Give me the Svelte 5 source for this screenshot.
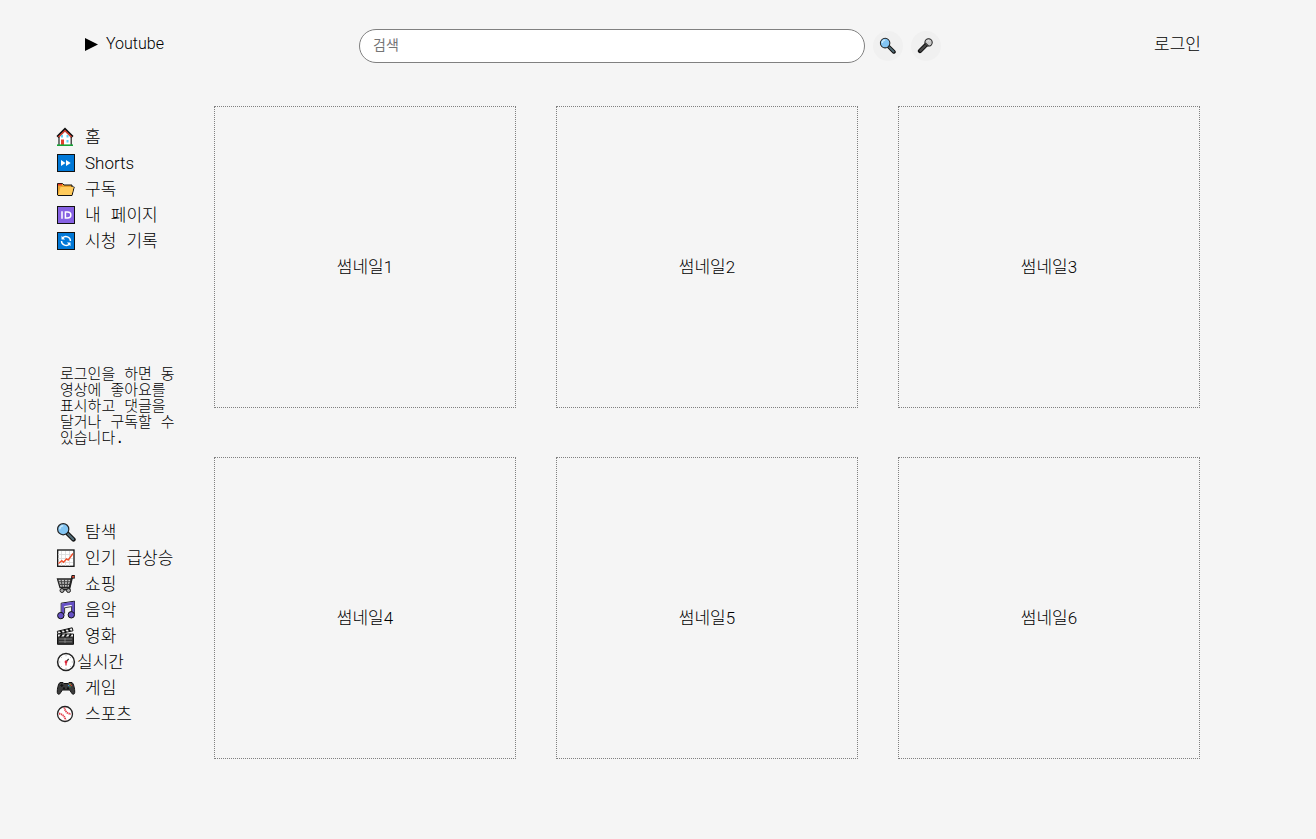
<script>
  const mainMenu = [
    { icon: 'home', label: '홈' },
    { icon: 'shorts', label: 'Shorts', latin: true },
    { icon: 'folder', label: '구독' },
    { icon: 'id', label: '내 페이지' },
    { icon: 'history', label: '시청 기록' }
  ];
  const exploreMenu = [
    { icon: 'search', label: '탐색' },
    { icon: 'chart', label: '인기 급상승' },
    { icon: 'cart', label: '쇼핑' },
    { icon: 'music', label: '음악' },
    { icon: 'movie', label: '영화' },
    { icon: 'clock', label: '실시간', tight: true },
    { icon: 'game', label: '게임' },
    { icon: 'ball', label: '스포츠' }
  ];
  const thumbnails = [1, 2, 3, 4, 5, 6];
</script>

{#snippet icon(name)}
  <svg class="icon" viewBox="0 0 20 20" aria-hidden="true">
    {#if name === 'home'}
      <path d="M3 9v9h12V9L9 3z" fill="#fff" />
      <path d="M3 9.500V18M15.200 9.500V18" stroke="#222" stroke-width="1.200" />
      <path d="M1.500 10 9 2.500l7.500 7.500" fill="none" stroke="#111" stroke-width="3" />
      <path d="M2.500 10 9 3.600l6.500 6.400" fill="none" stroke="#ea4a3a" stroke-width="1.300" />
      <path d="M5 8h2v2.500H5zM10.500 8h2v2.500h-2zM10.500 13h2v2.500h-2z" fill="#5fd0f5" />
      <path d="M5 12.500h3V18H5z" fill="#e0402e" />
      <path d="M1 18.200h16" stroke="#16a637" stroke-width="1.600" />
    {:else if name === 'shorts'}
      <rect x="1.500" y="1.500" width="17" height="17" fill="#0078d7" stroke="#111" />
      <path d="m5 7 4.500 3L5 13zM10 7l4.700 3-4.700 3z" fill="#fff" />
    {:else if name === 'folder'}
      <path d="M1.500 16V4.500h5l1.500 1.500h8V8h2.200L16 16.500H2z" fill="#e9a22c" stroke="#111" stroke-linejoin="round" />
      <path d="M4.500 8h13.200l-2.200 8H2.300z" fill="#ffcb5c" />
      <path d="M2 4.800h4v1.700H2z" fill="#e33b22" />
    {:else if name === 'id'}
      <rect x="1.500" y="1.500" width="17" height="17" fill="#8661e3" stroke="#111" />
      <path d="M6 6.200v7.600M9.400 7h2c4.600 0 4.600 6 0 6h-2z" fill="none" stroke="#fff" stroke-width="1.500" />
    {:else if name === 'history'}
      <rect x="1.500" y="1.500" width="17" height="17" fill="#0078d7" stroke="#111" />
      <path d="M6.500 7a4.600 4.600 0 0 1 8 3M13.500 13a4.600 4.600 0 0 1-8-3" fill="none" stroke="#fff" stroke-width="1.400" />
      <path d="M5.500 4.800v3.600h3.600zM14.500 15.200v-3.600h-3.600z" fill="#fff" />
    {:else if name === 'search'}
      <path d="m11.500 11.500 6 6" stroke="#111" stroke-width="4.400" stroke-linecap="round" />
      <path d="m12 12 5.200 5.200" stroke="#526d78" stroke-width="2.200" stroke-linecap="round" />
      <circle cx="7.200" cy="7.200" r="5.600" fill="#83c5f3" stroke="#222" stroke-width="1.200" />
      <path d="M3.800 7.200a3.500 3.500 0 0 1 3.500-3.500" fill="none" stroke="#c9e9fb" stroke-width="1.600" />
    {:else if name === 'mic'}
      <path d="m10.500 9.500-7 7" stroke="#111" stroke-width="5" stroke-linecap="round" />
      <path d="m10 10-6 6" stroke="#484848" stroke-width="2.600" stroke-linecap="round" />
      <circle cx="13.600" cy="6.400" r="4.300" fill="#c9c9c9" stroke="#222" stroke-width="1.200" />
      <path d="m9.800 6.800 3.700 3.700" stroke="#222" stroke-width="1.200" />
      <path d="m12 5 1.500-1 1.200 1" stroke="#f2f2f2" fill="none" />
    {:else if name === 'chart'}
      <rect x="1.700" y="2" width="16.300" height="16.300" fill="#fff" stroke="#111" stroke-width="1.300" />
      <path d="M5.500 3v15M9.500 3v15M13.500 3v15M2 6.500h15M2 10.500h15M2 14.500h15" stroke="#d8d8d8" stroke-width=".8" />
      <path d="m2.500 15.500 3.300-2.800 1.700 1.500 3-3.200 1.700 1L17 5.500" fill="none" stroke="#f0502c" stroke-width="1.400" />
    {:else if name === 'cart'}
      <path d="M1.500 5h14l-2.200 8.500H4z" fill="#ccc" stroke="#222" stroke-width="1.300" />
      <path d="M5 5 6.300 13M8.500 5v8M12 5l-1 8M2.500 7.700h12M3 10.400h11" stroke="#444" stroke-width="1.100" />
      <path d="M17.500 3h-1.300l-3 12.500H5" fill="none" stroke="#222" stroke-width="1.800" />
      <path d="M15.600 2.800h3.200" stroke="#111" stroke-width="3.600" />
      <path d="M16.200 2.800h2" stroke="#e94b34" stroke-width="1.800" />
      <circle cx="6" cy="16.500" r="2" fill="#aaa" stroke="#222" />
      <circle cx="12.500" cy="16.500" r="2" fill="#aaa" stroke="#222" />
    {:else if name === 'music'}
      <path d="M5.200 14V3.200l13.300-2V14" fill="none" stroke="#111" stroke-width="1" />
      <path d="M6.900 15.500V4.800l10.200-1.700v11.200" fill="none" stroke="#6651c5" stroke-width="2.800" />
      <path d="M8.600 13.500V7.800l7-1.200V12" fill="none" stroke="#111" stroke-width=".8" />
      <circle cx="4.800" cy="15.600" r="3.200" fill="#6651c5" stroke="#111" />
      <circle cx="15.300" cy="14.800" r="3.200" fill="#6651c5" stroke="#111" />
    {:else if name === 'movie'}
      <path d="M1.500 8h16v10.300h-16z" fill="#333" stroke="#111" />
      <path d="m1.300 5.300 14.900-3.500.8 3L2 8z" fill="#f2f2f2" stroke="#111" />
      <path d="m4 4.700 2.200 2.200M8 3.700l2.200 2.400M12 2.800l2.200 2.400" stroke="#111" stroke-width="1.800" />
      <path d="M2 9.500h15" stroke="#eee" stroke-width="2" />
      <path d="m6 8-2 3M10.500 8l-2 3M15 8l-2 3" stroke="#111" stroke-width="1.900" />
      <path d="M3 13h13M3 15.800h13M9 12v5" stroke="#999" stroke-width=".7" />
    {:else if name === 'clock'}
      <circle cx="10" cy="10" r="8.400" fill="#fff" stroke="#222" stroke-width="1.500" />
      <path d="M10 3v1.300M10 15.700V17M3 10h1.300M15.700 10H17M5 5l.8.8M15 5l-.8.8M5 15l.8-.8M15 15l-.8-.8" stroke="#aaa" stroke-width=".8" />
      <path d="m10 10 2.700-3.200" stroke="#333" stroke-width="1.200" />
      <path d="M10 8.800v4.700" stroke="#db2539" stroke-width="1.300" />
      <circle cx="10" cy="10" r="1.400" fill="#db2539" />
    {:else if name === 'game'}
      <path d="M4 4.500h3l1 1h4l1-1h3c1.500 1 2.900 6 2.700 10-.2 2.500-2.500 2-3.300.2L13.700 12H6.300l-1.700 2.700c-.8 1.800-3.100 2.300-3.300-.2-.2-4 1.200-9 2.700-10z" fill="#3b3b3b" stroke="#111" />
      <path d="M4.300 7.500h3M5.800 6v3" stroke="#111" stroke-width="1.200" />
      <circle cx="8" cy="10.300" r="1.100" fill="#111" />
      <circle cx="12" cy="10.300" r="1.100" fill="#111" />
      <circle cx="14" cy="6.200" r=".7" fill="#eab02d" />
      <circle cx="12.700" cy="7.500" r=".7" fill="#3c9ae8" />
      <circle cx="15.300" cy="7.500" r=".7" fill="#e5432f" />
      <circle cx="14" cy="8.800" r=".7" fill="#36a852" />
    {:else if name === 'ball'}
      <circle cx="9" cy="10" r="7.500" fill="#fff" stroke="#222" stroke-width="1.300" />
      <path d="M8.500 3.500c.2 3.500 2.500 6 6.500 6.500M3 9.500c3.700.7 6 3 6.500 6.700" fill="none" stroke="#e33d4a" stroke-width="1.800" stroke-dasharray="1.300 .6" />
    {/if}
  </svg>
{/snippet}

{#snippet menu(items, name)}
  <nav aria-label={name}>
    <ul>
      {#each items as item}
        <li>
          <a href="#{item.icon}" class:tight={item.tight} class:latin={item.latin}>
            {@render icon(item.icon)}<span>{item.label}</span>
          </a>
        </li>
      {/each}
    </ul>
  </nav>
{/snippet}

<header>
  <a class="logo" href="#top">
    <svg viewBox="0 0 13 13" aria-hidden="true"><path d="M0 0 13 6.500 0 13z" /></svg>
    <span>Youtube</span>
  </a>
  <form role="search" onsubmit={(event) => event.preventDefault()}>
    <input type="search" placeholder="검색" aria-label="검색" />
    <button type="submit" aria-label="검색">{@render icon('search')}</button>
    <button type="button" aria-label="음성 검색">{@render icon('mic')}</button>
  </form>
  <a class="login" href="#login">로그인</a>
</header>

<div class="page">
  <aside>
    {@render menu(mainMenu, '메뉴')}
    <p>로그인을 하면 동<br />영상에 좋아요를<br />표시하고 댓글을<br />달거나 구독할 수<br />있습니다.</p>
    {@render menu(exploreMenu, '탐색')}
  </aside>
  <main>
    {#each thumbnails as number}
      <article>썸네일{number}</article>
    {/each}
  </main>
</div>

<style>
  :global(body) {
    background: #f5f5f5;
    color: #000;
    font: 300 17px/26px Roboto, 'Noto Sans CJK KR', sans-serif;
  }
  a {
    color: inherit;
    text-decoration: none;
  }
  header {
    display: grid;
    grid-template-columns: 274px minmax(0, 1fr) 260px;
    align-items: center;
    padding: 28px 115px 0 85px;
    height: 36px;
  }
  .logo {
    display: flex;
    align-items: center;
    gap: 8px;
    padding-bottom: 4px;
    font-size: 16px;
  }
  .logo svg {
    width: 13px;
    height: 13px;
  }
  form {
    display: flex;
    align-items: center;
    gap: 8px;
  }
  input {
    box-sizing: border-box;
    flex: 1;
    min-width: 0;
    height: 34px;
    padding: 0 13px 4px;
    border: 1px solid #808080;
    border-radius: 17px;
    background: #fff;
    font: 14px 'Noto Sans CJK KR', sans-serif;
    appearance: none;
    outline: none;
  }
  input::placeholder {
    color: #757575;
  }
  button {
    display: grid;
    place-items: center;
    width: 30px;
    height: 30px;
    padding: 0 1px 2px 0;
    border: 0;
    border-radius: 50%;
    background: #f0f0f0;
  }
  button .icon {
    width: 17px;
    height: 17px;
  }
  .icon {
    flex: none;
    width: 20px;
    height: 20px;
  }
  .login {
    justify-self: end;
    padding-bottom: 4px;
  }
  .page {
    display: flex;
    padding: 42px 116px 80px 56px;
  }
  aside {
    flex: 0 0 158px;
    padding-top: 18px;
    font-family: 'Liberation Mono', 'Noto Sans CJK KR', monospace;
  }
  ul {
    margin: 0;
    padding: 0;
    list-style: none;
  }
  li a {
    display: flex;
    align-items: center;
    gap: 9px;
    height: 26px;
    white-space: nowrap;
  }
  li span {
    padding-top: 4px;
  }
  li .tight {
    gap: 1px;
  }
  li .latin {
    font-family: Roboto, sans-serif;
  }
  li .latin span {
    padding-top: 0;
  }
  p {
    margin: 114px 0 71px 4px;
    font-size: 15px;
    line-height: 16px;
    white-space: nowrap;
  }
  main {
    flex: 1;
    display: grid;
    grid-template-columns: repeat(3, minmax(0, 1fr));
    gap: 49px 40px;
    align-content: start;
  }
  article {
    box-sizing: border-box;
    display: grid;
    place-items: center;
    aspect-ratio: 1;
    padding-top: 20px;
    border: 1px dotted #808080;
  }
</style>
